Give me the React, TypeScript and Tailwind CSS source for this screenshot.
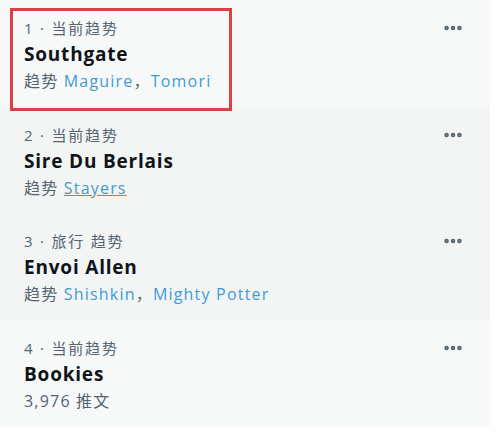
import { MoreHorizontal } from "lucide-react";

type Trend = {
  id: number;
  label: string;
  title: string;
  links?: string[];
  count?: string;
  bg: string;
  underline?: boolean;
  selected?: boolean;
};

const trends: Trend[] = [
  { id: 1, label: "1 · 当前趋势", title: "Southgate", links: ["Maguire", "Tomori"], bg: "bg-[#f7f9f9]", selected: true },
  { id: 2, label: "2 · 当前趋势", title: "Sire Du Berlais", links: ["Stayers"], bg: "bg-[#f3f4f4]", underline: true },
  { id: 3, label: "3 · 旅行 趋势", title: "Envoi Allen", links: ["Shishkin", "Mighty Potter"], bg: "bg-[#f3f4f4]" },
  { id: 4, label: "4 · 当前趋势", title: "Bookies", count: "3,976 推文", bg: "bg-[#f7f9f9]" },
];

export default function App() {
  return (
    <div
      className="w-[500px] h-[440px] bg-white overflow-hidden"
      style={{ fontFamily: '"Open Sans", "Noto Sans CJK SC", sans-serif' }}
    >
      <div className="w-[490px] flex flex-col">
        {trends.map((t) => (
          <div key={t.id} className={`relative h-[106.5px] ${t.bg} pl-6 pr-6 pt-[15px] flex`}>
            {t.selected && (
              <div className="absolute left-[10px] top-[8px] w-[222px] h-[103px] border-[3px] border-[#dc4047] z-10" />
            )}
            <div className="flex-1 flex flex-col">
              <div className="text-[15px] leading-[26px] tracking-[1.8px] text-[#536471]">{t.label}</div>
              <div className="text-[19px] leading-[26px] tracking-[0.8px] font-bold text-[#0f1419]">{t.title}</div>
              <div className="text-[16px] leading-[28px] tracking-[1.2px] text-[#536471]">
                {t.links ? (
                  <>
                    趋势{" "}
                    {t.links.map((l, i) => (
                      <span key={l}>
                        <span className={`text-[#3f9bd6] ${t.underline ? "underline" : ""}`}>{l}</span>
                        {i < t.links!.length - 1 && <span>，</span>}
                      </span>
                    ))}
                  </>
                ) : (
                  t.count
                )}
              </div>
            </div>
            <MoreHorizontal className="w-[22px] h-[22px] text-[#536471] mt-[2px] mr-[2px]" strokeWidth={3} />
          </div>
        ))}
      </div>
    </div>
  );
}
